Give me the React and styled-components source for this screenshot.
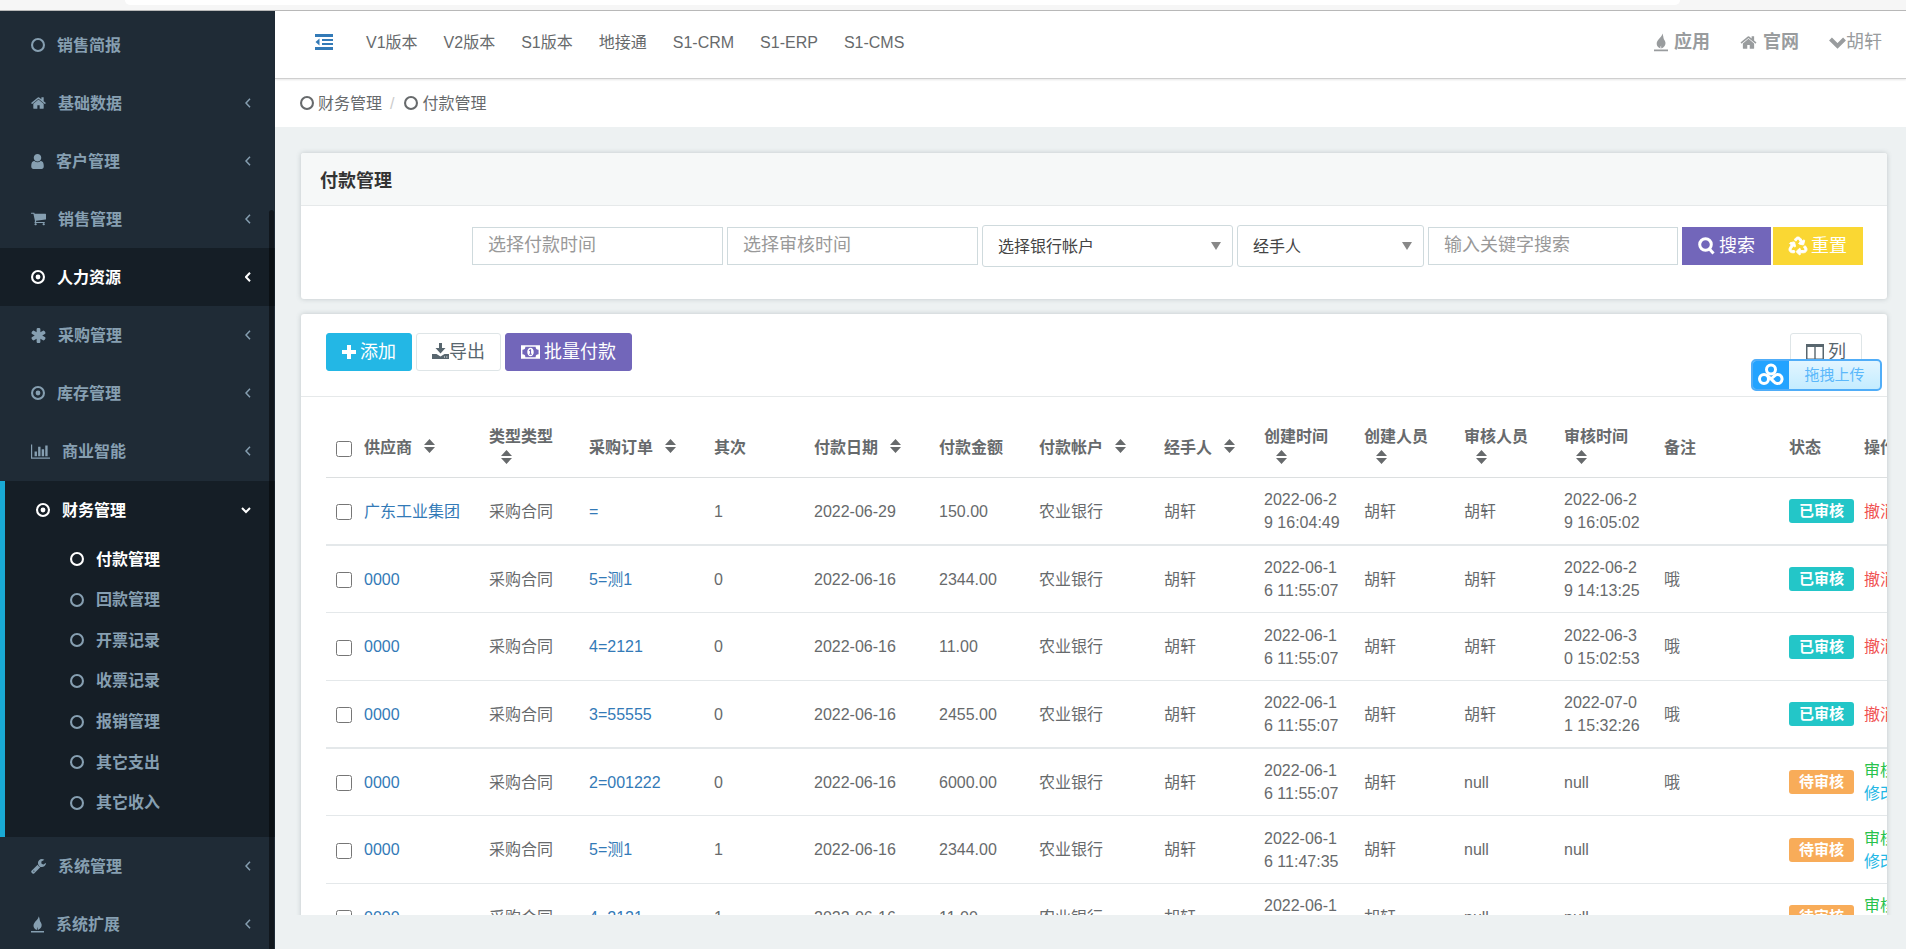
import React from "react";
import styled, { createGlobalStyle, css } from "styled-components";
import { FaRecycle } from "react-icons/fa";

const Global = createGlobalStyle`
  *, *::before, *::after { box-sizing: border-box; }
  body {
    margin: 0;
    color: #676a6c;
    background: #edf1f2;
    font: 16px/23px "Liberation Sans", "Noto Sans CJK SC", sans-serif;
  }
  a { color: inherit; text-decoration: none; }
  ul { list-style: none; margin: 0; padding: 0; }
  button, input, select { font-family: inherit; }
`;

/* ---------- icons ---------- */

const ICONS = {
  home: [
    "64 128 1664 1536", 15, 14,
    "M1472 992v480q0 26-19 45t-45 19h-384v-384h-256v384h-384q-26 0-45-19t-19-45v-480q0-1 .5-3t.5-3l575-474 575 474q1 2 1 6zm223-69l-62 74q-8 9-21 11h-3q-13 0-21-7l-692-577-692 577q-12 8-24 7-13-2-21-11l-62-74q-8-10-7-23.5t11-21.5l719-599q32-26 76-26t76 26l244 204v-195q0-14 9-23t23-9h192q14 0 23 9t9 23v408l219 182q10 8 11 21.5t-7 23.5z",
  ],
  user: [
    "256 128 1280 1536", 13, 15,
    "M1536 1399q0 109-62.5 187t-150.5 78h-854q-88 0-150.5-78t-62.5-187q0-85 8.5-160.5t31.5-152 58.5-131 94-89 134.5-34.5q131 128 313 128t313-128q76 0 134.5 34.5t94 89 58.5 131 31.5 152 8.5 160.5zm-256-887q0 159-112.5 271.5t-271.5 112.5-271.5-112.5-112.5-271.5 112.5-271.5 271.5-112.5 271.5 112.5 112.5 271.5z",
  ],
  cart: [
    "64 192 1664 1536", 15, 14,
    "M704 1536q0 52-38 90t-90 38-90-38-38-90 38-90 90-38 90 38 38 90zm896 0q0 52-38 90t-90 38-90-38-38-90 38-90 90-38 90 38 38 90zm128-1088v512q0 24-16.5 42.5t-40.5 21.5l-1044 122q13 60 13 70 0 16-24 64h920q26 0 45 19t19 45-19 45-45 19h-1024q-26 0-45-19t-19-45q0-11 8-31.5t16-36 21.5-40 15.5-29.5l-177-823h-204q-26 0-45-19t-19-45 19-45 45-19h256q16 0 28.5 6.5t19.5 15.5 13 24.5 8 26 5.5 29.5 4.5 26h1201q26 0 45 19t19 45z",
  ],
  asterisk: [
    "128 128 1536 1536", 15, 15,
    "M1546 1050q46 26 59.5 77.5t-12.5 97.5l-64 110q-26 46-77.5 59.5t-97.5-12.5l-266-153v307q0 52-38 90t-90 38h-128q-52 0-90-38t-38-90v-307l-266 153q-46 26-97.5 12.5t-77.5-59.5l-64-110q-26-46-12.5-97.5t59.5-77.5l266-154-266-154q-46-26-59.5-77.5t12.5-97.5l64-110q26-46 77.5-59.5t97.5 12.5l266 153v-307q0-52 38-90t90-38h128q52 0 90 38t38 90v307l266-153q46-26 97.5-12.5t77.5 59.5l64 110q26 46 12.5 97.5t-59.5 77.5l-266 154z",
  ],
  chart: [
    "0 128 2048 1536", 19, 15,
    "M640 896v512h-256v-512h256zm384-512v1024h-256v-1024h256zm1024 1152v128h-2048v-1536h128v1408h1920zm-640-896v768h-256v-768h256zm384-384v1152h-256v-1152h256z",
  ],
  wrench: [
    "64 128 1664 1664", 15, 15,
    "M448 1472q0-26-19-45t-45-19-45 19-19 45 19 45 45 19 45-19 19-45zm644-420l-682 682q-37 37-90 37-52 0-91-37l-106-108q-38-36-38-90 0-53 38-91l681-681q39 98 114.5 173.5t173.5 114.5zm634-435q0 39-23 106-47 134-164.5 217.5t-258.5 83.5q-185 0-316.5-131.5t-131.5-316.5 131.5-316.5 316.5-131.5q58 0 121.5 16.5t107.5 46.5q16 11 16 28t-16 28l-293 169v224l193 107q5-3 79-48.5t135.5-81 70.5-35.5q15 0 23.5 10t8.5 25z",
  ],
  circle: [
    "0 0 14 14", 14, 14,
    "M7 0a7 7 0 1 0 0 14A7 7 0 0 0 7 0zm0 2.1a4.9 4.9 0 1 1 0 9.8 4.9 4.9 0 0 1 0-9.8z",
  ],
  dot: [
    "0 0 14 14", 14, 14,
    "M7 0a7 7 0 1 0 0 14A7 7 0 0 0 7 0zm0 2.1a4.9 4.9 0 1 1 0 9.8 4.9 4.9 0 0 1 0-9.8zM7 4.6a2.4 2.4 0 1 0 0 4.8 2.4 2.4 0 0 0 0-4.8z",
  ],
  fire: [
    "0 0 14 18", 13, 17,
    "M0 16h14v1.700H0zM8 0c.4 1.700-.7 2.800-2 4.300C4.200 6.200 2.500 8 2.700 10.500c.1 2 1.600 3.500 4 4.500-.6-1.300-.2-2.300.5-3.100-.3 1.100-.1 2 .3 3 2.500-1 4-2.700 4-5.300 0-1.700-1.100-2.900-1.700-4.100C9.100 3.700 9.600 1.500 8 0z",
  ],
  outdent: [
    "0 0 18 16", 18, 16,
    "M0 0h18v3H0zM7 5h11v2H7zM7 9h11v2H7zM0 13h18v3H0zM4.500 4.500v7L.5 8z",
  ],
  plus: ["0 0 14 14", 14, 14, "M5 0h4v5h5v4H9v5H5V9H0V5h5z"],
  save: [
    "0 0 17 17", 17, 17,
    "M7 0h3v5h3.500L8.500 10.500 3.500 5H7zM0 11h4.500l4 2.500 4-2.500H17v5H0zM12 13.500v1h1v-1zM14.300 13.500v1h1v-1z",
  ],
  money: [
    "0 0 20 14", 19, 14,
    "M0 0h20v14H0zM4.600 1.500A3 3 0 0 1 1.500 4.500v5a3 3 0 0 1 3.100 3h10.800a3 3 0 0 1 3.100-3v-5a3 3 0 0 1-3.100-3zM10 2.500c2 0 3.400 2 3.400 4.500S12 11.500 10 11.500 6.600 9.500 6.600 7 8 2.500 10 2.500zM9.600 4.200 8.200 5.400l.6.800.6-.4v3h-.8v1h2.800v-1h-.8V4.200z",
  ],
  columns: [
    "0 0 18 16", 18, 16,
    "M0 0h18v16H0zM1.500 3v11.500h6.800V3zM9.700 3v11.500h6.800V3z",
  ],
  sort: ["0 0 11 14", 11, 14, "M5.500 0 11 6H0zM0 8h11l-5.500 6z"],
  caret: ["0 0 10 8", 10, 8, "M0 0h10L5 8z"],
};

const Svg = styled.svg`
  flex: none;
  display: inline-block;
  fill: currentColor;
  fill-rule: evenodd;
`;

function Icon({ name, scale = 1, ...rest }) {
  const [box, w, h, d] = ICONS[name];
  return (
    <Svg
      viewBox={box}
      width={Math.round(w * scale)}
      height={Math.round(h * scale)}
      aria-hidden="true"
      {...rest}
    >
      <path d={d} />
    </Svg>
  );
}

const Line = styled.svg`
  flex: none;
  fill: none;
  stroke: currentColor;
`;

const RecycleIcon = styled(FaRecycle)`
  stroke: currentColor;
  stroke-width: 28px;
  overflow: visible;
`;

/* ---------- shell ---------- */

const Shell = styled.div`
  display: flex;
  flex-direction: column;
  height: 100vh;
  overflow: hidden;
`;

const BrowserEdge = styled.div`
  flex: none;
  height: 11px;
  padding: 0 226px 0 125px;
  background: #f6f6f6;
  border-bottom: 1px solid #b9b9b9;

  &::before {
    content: "";
    display: block;
    height: 5px;
    background: #fff;
    border-radius: 0 0 5px 5px;
  }
`;

const Body = styled.div`
  display: flex;
  flex: 1;
  min-height: 0;
`;

/* ---------- sidebar ---------- */

const Sidebar = styled.nav`
  position: relative;
  flex: none;
  width: 275px;
  padding-top: 5px;
  overflow: hidden;
  color: #869fb1;
  background: #1f2b36;
  font-weight: 700;
`;

const ScrollThumb = styled.div`
  position: absolute;
  top: 199px;
  right: 1px;
  bottom: 0;
  width: 5px;
  border-radius: 4px 4px 0 0;
  background: rgba(0, 0, 0, 0.45);
`;

const activeItem = css`
  color: #fff;
  background: #151e26;
`;

const MenuLink = styled.a`
  display: flex;
  align-items: center;
  gap: 12px;
  height: 58px;
  padding: 0 24px 0 31px;
  ${(p) => p.$active && activeItem}

  & > :last-child:not(span) { margin-left: auto; }
`;

const MenuGroup = styled.li`
  margin-top: 1px;
  border-left: 5px solid #19aad5;
  ${activeItem}
`;

const SubMenu = styled.ul`
  display: grid;
  grid-auto-rows: 1fr;
  height: 298px;
  padding-bottom: 14px;
`;

const SubLink = styled.a`
  display: flex;
  align-items: center;
  gap: 12px;
  height: 100%;
  padding-left: 65px;
  color: ${(p) => (p.$active ? "#fff" : "#869fb1")};
`;

const MENU_TOP = [
  { icon: "circle", label: "销售简报", leaf: true },
  { icon: "home", label: "基础数据" },
  { icon: "user", label: "客户管理" },
  { icon: "cart", label: "销售管理" },
  { icon: "dot", label: "人力资源", active: true },
  { icon: "asterisk", label: "采购管理" },
  { icon: "dot", label: "库存管理" },
  { icon: "chart", label: "商业智能" },
];
const SUB = ["付款管理", "回款管理", "开票记录", "收票记录", "报销管理", "其它支出", "其它收入"];
const MENU_END = [
  { icon: "wrench", label: "系统管理" },
  { icon: "fire", label: "系统扩展" },
];

const MenuItem = ({ icon, label, leaf, active }) => (
  <li>
    <MenuLink href="#" $active={active}>
      <Icon name={icon} />
      <span>{label}</span>
      {!leaf && (
        <Line width="6" height="10" viewBox="0 0 6 10" strokeWidth={active ? 2 : 1.5}>
          <path d="M5 .8 1 5l4 4.200" />
        </Line>
      )}
    </MenuLink>
  </li>
);

/* ---------- header ---------- */

const Main = styled.div`
  display: flex;
  flex-direction: column;
  flex: 1;
  min-width: 0;
  padding-bottom: 34px;
`;

const Header = styled.header`
  position: relative;
  display: flex;
  flex: none;
  align-items: center;
  height: 68px;
  padding: 0 24px 4px 40px;
  background: #fff;
  border-bottom: 1px solid #cfcfcf;
  box-shadow: 0 1px 2px rgba(0, 0, 0, 0.1);
`;

const ToggleButton = styled.button`
  display: flex;
  margin: 0 33px 0 0;
  padding: 0 0 2px;
  color: #337ab7;
  background: none;
  border: 0;
`;

const HeaderNav = styled.nav`
  display: flex;
  gap: 26px;
`;

const HeaderLinks = styled.div`
  display: flex;
  align-items: center;
  gap: 30px;
  margin-left: auto;
  color: #999c9e;
  font-size: 18px;
`;

const HeaderLink = styled.a`
  display: flex;
  align-items: center;
  gap: ${(p) => (p.$plain ? 0 : 6)}px;
  font-weight: ${(p) => (p.$plain ? 400 : 700)};
`;

const Breadcrumb = styled.ol`
  display: flex;
  flex: none;
  align-items: center;
  height: 48px;
  margin: 0;
  padding: 0 25px;
  list-style: none;
  background: #fff;

  li { display: flex; }
  li + li::before {
    content: "/";
    padding: 0 10px 0 8px;
    color: #ccc;
  }
  a {
    display: flex;
    align-items: center;
    gap: 4px;
  }
`;

/* ---------- cards ---------- */

const Content = styled.main`
  flex: 1;
  min-height: 0;
  padding: 26px 19px 0 26px;
  overflow: hidden;
`;

const Card = styled.section`
  position: relative;
  margin-bottom: 15px;
  background: #fff;
  border-radius: 3px;
  box-shadow: 0 0 5px rgba(88, 102, 110, 0.3);
`;

const CardTitle = styled.h1`
  margin: 0;
  padding: 16px 19px 12px;
  font-size: 18px;
  line-height: 24px;
  color: #333;
  background: #f6f8f8;
  border-bottom: 1px solid #e6e9ea;
  border-radius: 3px 3px 0 0;
`;

const Filters = styled.form`
  display: flex;
  flex-wrap: wrap;
  align-items: center;
  justify-content: flex-end;
  gap: 4px;
  padding: 19px 24px 32px;
`;

const TextField = styled.input`
  width: ${(p) => p.$width}px;
  height: 38px;
  padding: 0 15px 2px;
  font-size: 18px;
  color: #555;
  background: #fff;
  border: 1px solid #cfdadd;
  border-radius: 0;

  &::placeholder { color: #999; }
`;

const SelectBox = styled.span`
  position: relative;
  display: block;
  width: ${(p) => p.$width}px;

  svg {
    position: absolute;
    top: 17px;
    right: 12px;
    color: #888;
    pointer-events: none;
  }
`;

const Select = styled.select`
  appearance: none;
  width: 100%;
  height: 42px;
  padding: 0 15px;
  font-size: 16px;
  color: #444;
  background: #fff;
  border: 1px solid #cfdadd;
  border-radius: 3px;
`;

const ButtonPair = styled.div`
  display: flex;
  gap: 2px;
`;

const TONES = {
  purple: "color:#fff;background:#7266ba;border-color:#7266ba;",
  yellow: "color:#fff;background:#fad733;border-color:#fad733;",
  blue: "color:#fff;background:#23b7e5;border-color:#23b7e5;",
  plain: "color:#58666e;background:#fff;border-color:#dee5e7;",
};

const Button = styled.button`
  display: inline-flex;
  align-items: center;
  justify-content: center;
  gap: ${(p) => (p.$tight ? 0 : 4)}px;
  height: 38px;
  padding: 0 15px 1px;
  font-size: 18px;
  line-height: 24px;
  white-space: nowrap;
  border: 1px solid;
  border-radius: ${(p) => (p.$square ? 0 : 3)}px;
  ${(p) => TONES[p.$tone]}
`;

const Toolbar = styled.div`
  position: relative;
  display: flex;
  gap: 4px;
  height: 83px;
  padding: 19px 25px 0;
  border-bottom: 1px solid #e6e9ea;

  & > :nth-last-child(2) { margin-left: auto; }
`;

const UploadWidget = styled.button`
  position: absolute;
  top: 45px;
  right: 5px;
  display: flex;
  width: 131px;
  height: 32px;
  padding: 0;
  overflow: hidden;
  font-size: 15px;
  line-height: 28px;
  color: #5bb8fb;
  background: linear-gradient(#e2f5ff, #c4ecff);
  border: 2px solid #50adf8;
  border-radius: 5px;

  span { flex: 1; }
`;

const UploadLogo = styled.svg`
  flex: none;
  width: 36px;
  height: 28px;
  fill: none;
  stroke: #fff;
  stroke-width: 3;
  stroke-linecap: round;
  background: #23a3ff;
`;

/* ---------- table ---------- */

const TableWrap = styled.div`
  padding: 20px 0 0 25px;
  overflow: hidden;
`;

const Table = styled.table`
  table-layout: fixed;
  width: 1628px;
  border-spacing: 0;
  word-break: break-all;

  th, td {
    padding: 0 10px;
    text-align: left;
    vertical-align: middle;
  }
  th {
    height: 61px;
    padding-top: 2px;
    line-height: 22px;
    border-bottom: 1px solid #dcdfe0;
  }
  td {
    height: 68px;
    border-bottom: 1px solid #e4e8ea;
  }
  tr:nth-child(3n + 1) td { border-bottom-width: 2px; }
  tr:nth-child(3n + 2) td { height: 67px; }
`;

const SortIcon = styled(Icon)`
  margin-left: 12px;
`;

const Check = styled.input`
  display: block;
  width: 16px;
  height: 16px;
  margin: 2px 0 0;
`;

const RowLink = styled.a`
  && { color: ${(p) => p.$color || "#337ab7"}; }
  white-space: nowrap;
`;

const Badge = styled.span`
  display: inline-block;
  padding: 0 10px;
  font-size: 15px;
  font-weight: 700;
  line-height: 24px;
  white-space: nowrap;
  color: #fff;
  background: ${(p) => (p.$done ? "#23c6c8" : "#f8ac59")};
  border-radius: 3px;
`;

const COLUMNS = [
  ["供应商", 125, true],
  ["类型类型", 100, true],
  ["采购订单", 125, true],
  ["其次", 100],
  ["付款日期", 125, true],
  ["付款金额", 100],
  ["付款帐户", 125, true],
  ["经手人", 100, true],
  ["创建时间", 100, true],
  ["创建人员", 100, true],
  ["审核人员", 100, true],
  ["审核时间", 100, true],
  ["备注", 125],
  ["状态", 75],
  ["操作", 100],
];

const ROWS = [
  ["广东工业集团", "=", "1", "2022-06-29", "150.00", "2022-06-29 16:04:49", "胡轩", "2022-06-29 16:05:02", "", true],
  ["0000", "5=测1", "0", "2022-06-16", "2344.00", "2022-06-16 11:55:07", "胡轩", "2022-06-29 14:13:25", "哦", true],
  ["0000", "4=2121", "0", "2022-06-16", "11.00", "2022-06-16 11:55:07", "胡轩", "2022-06-30 15:02:53", "哦", true],
  ["0000", "3=55555", "0", "2022-06-16", "2455.00", "2022-06-16 11:55:07", "胡轩", "2022-07-01 15:32:26", "哦", true],
  ["0000", "2=001222", "0", "2022-06-16", "6000.00", "2022-06-16 11:55:07", "null", "null", "哦", false],
  ["0000", "5=测1", "1", "2022-06-16", "2344.00", "2022-06-16 11:47:35", "null", "null", "", false],
  ["0000", "4=2121", "1", "2022-06-16", "11.00", "2022-06-16 11:47:35", "null", "null", "", false],
];

function PaymentRow({ row, index }) {
  const [supplier, order, times, date, amount, created, auditor, audited, note, done] = row;
  return (
    <tr>
      <td><Check type="checkbox" aria-label={`选择第${index + 1}行`} /></td>
      <td><RowLink href="#">{supplier}</RowLink></td>
      <td>采购合同</td>
      <td><RowLink href="#">{order}</RowLink></td>
      <td>{times}</td>
      <td>{date}</td>
      <td>{amount}</td>
      <td>农业银行</td>
      <td>胡轩</td>
      <td>{created}</td>
      <td>胡轩</td>
      <td>{auditor}</td>
      <td>{audited}</td>
      <td>{note}</td>
      <td><Badge $done={done}>{done ? "已审核" : "待审核"}</Badge></td>
      <td>
        {done ? (
          <RowLink href="#" $color="#f05050">撤消</RowLink>
        ) : (
          <>
            <RowLink href="#" $color="#27c24c">审核</RowLink>
            <br />
            <RowLink href="#" $color="#23b7e5">修改</RowLink>
          </>
        )}
      </td>
    </tr>
  );
}

export default function App() {
  return (
    <Shell>
      <Global />
      <BrowserEdge />
      <Body>
        <Sidebar aria-label="主菜单">
          <ul>
            {MENU_TOP.map((m) => <MenuItem key={m.label} {...m} />)}
            <MenuGroup>
              <MenuLink href="#">
                <Icon name="dot" />
                <span>财务管理</span>
                <Line width="10" height="7" viewBox="0 0 10 7" strokeWidth="2">
                  <path d="M1 1l4 4 4-4" />
                </Line>
              </MenuLink>
              <SubMenu>
                {SUB.map((label, i) => (
                  <li key={label}>
                    <SubLink href="#" $active={i === 0}>
                      <Icon name="circle" />
                      <span>{label}</span>
                    </SubLink>
                  </li>
                ))}
              </SubMenu>
            </MenuGroup>
            {MENU_END.map((m) => <MenuItem key={m.label} {...m} />)}
          </ul>
          <ScrollThumb />
        </Sidebar>

        <Main>
          <Header>
            <ToggleButton type="button" aria-label="收起菜单">
              <Icon name="outdent" />
            </ToggleButton>
            <HeaderNav>
              {["V1版本", "V2版本", "S1版本", "地接通", "S1-CRM", "S1-ERP", "S1-CMS"].map((t) => (
                <a key={t} href="#">{t}</a>
              ))}
            </HeaderNav>
            <HeaderLinks>
              <HeaderLink href="#"><Icon name="fire" scale={1.1} />应用</HeaderLink>
              <HeaderLink href="#"><Icon name="home" scale={1.1} />官网</HeaderLink>
              <HeaderLink href="#" $plain>
                <Line width="17" height="12" viewBox="0 0 17 12" strokeWidth="4">
                  <path d="M1.500 2l7 7 7-7" />
                </Line>
                胡轩
              </HeaderLink>
            </HeaderLinks>
          </Header>
          <Breadcrumb>
            <li><a href="#"><Icon name="circle" />财务管理</a></li>
            <li><a href="#"><Icon name="circle" />付款管理</a></li>
          </Breadcrumb>

          <Content>
            <Card>
              <CardTitle>付款管理</CardTitle>
              <Filters onSubmit={(e) => e.preventDefault()}>
                <TextField $width={251} type="text" placeholder="选择付款时间" aria-label="付款时间" />
                <TextField $width={251} type="text" placeholder="选择审核时间" aria-label="审核时间" />
                <SelectBox $width={251}>
                  <Select aria-label="银行帐户"><option>选择银行帐户</option></Select>
                  <Icon name="caret" />
                </SelectBox>
                <SelectBox $width={187}>
                  <Select aria-label="经手人"><option>经手人</option></Select>
                  <Icon name="caret" />
                </SelectBox>
                <TextField $width={250} type="text" placeholder="输入关键字搜索" aria-label="关键字" />
                <ButtonPair>
                  <Button type="submit" $tone="purple" $square>
                    <Line width="17" height="18" viewBox="0 0 17 18" strokeWidth="3">
                      <circle cx="7.500" cy="7.500" r="5.800" />
                      <path d="M11.500 12l4 4.500" />
                    </Line>
                    搜索
                  </Button>
                  <Button type="reset" $tone="yellow" $square>
                    <RecycleIcon size={18} />
                    重置
                  </Button>
                </ButtonPair>
              </Filters>
            </Card>

            <Card>
              <Toolbar>
                <Button type="button" $tone="blue"><Icon name="plus" />添加</Button>
                <Button type="button" $tone="plain" $tight><Icon name="save" />导出</Button>
                <Button type="button" $tone="purple"><Icon name="money" />批量付款</Button>
                <Button type="button" $tone="plain"><Icon name="columns" />列</Button>
                <UploadWidget type="button">
                  <UploadLogo viewBox="0 0 36 28">
                    <circle cx="18" cy="8.500" r="4.500" />
                    <circle cx="11" cy="18" r="4.500" />
                    <path d="M14.500 14.500L21 20.800A4.500 4.500 0 1 0 21.500 14.800L18 18" />
                  </UploadLogo>
                  <span>拖拽上传</span>
                </UploadWidget>
              </Toolbar>
              <TableWrap>
                <Table>
                  <colgroup>
                    <col width="28" />
                    {COLUMNS.map(([label, width]) => <col key={label} width={width} />)}
                  </colgroup>
                  <thead>
                    <tr>
                      <th><Check type="checkbox" aria-label="全选" /></th>
                      {COLUMNS.map(([label, , sortable]) => (
                        <th key={label} scope="col">
                          {label}
                          {sortable && <SortIcon name="sort" />}
                        </th>
                      ))}
                    </tr>
                  </thead>
                  <tbody>
                    {ROWS.map((row, i) => <PaymentRow key={i} row={row} index={i} />)}
                  </tbody>
                </Table>
              </TableWrap>
            </Card>
          </Content>
        </Main>
      </Body>
    </Shell>
  );
}
